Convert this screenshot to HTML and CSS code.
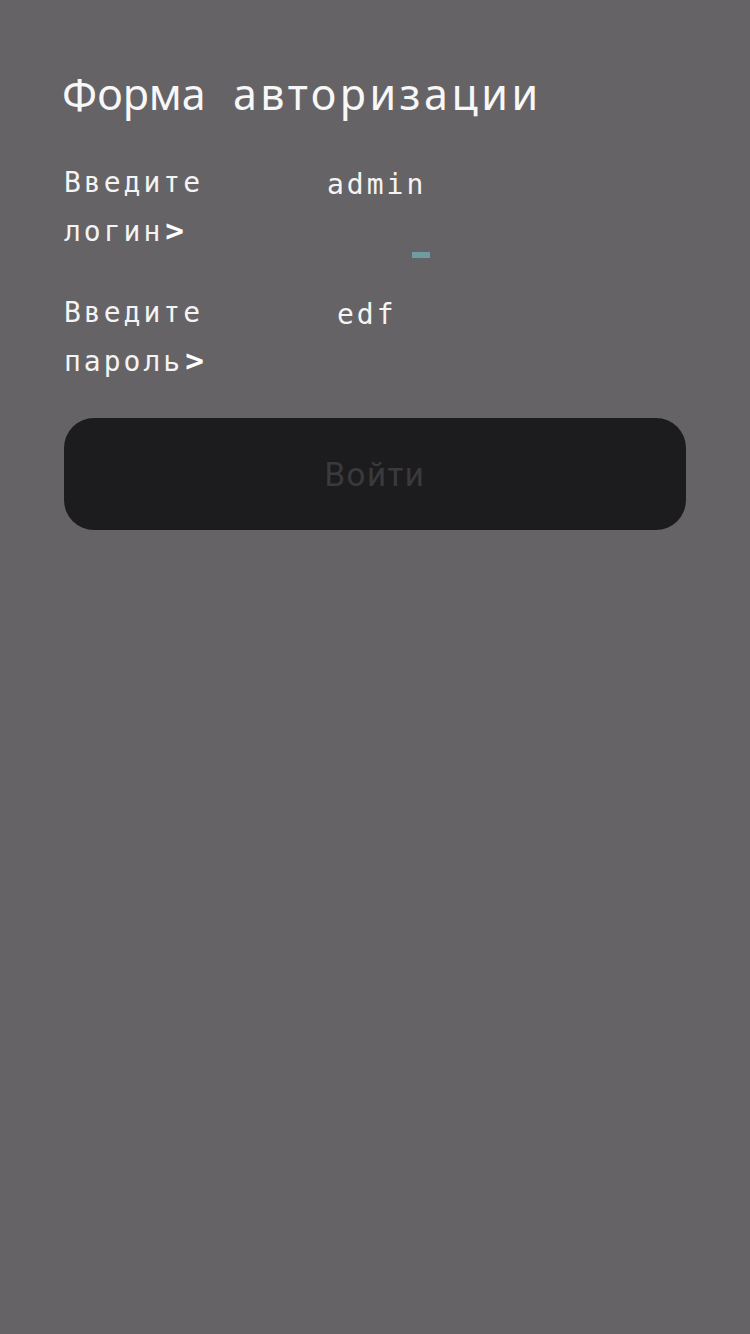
FILE: index.html
```html
<!DOCTYPE html>
<html lang="ru">
<head>
<meta charset="utf-8">
<title>Форма авторизации</title>
<link rel="stylesheet" href="styles.css">
</head>
<body>
<main class="page">
  <h1 class="title"><span class="title-a">Форма</span>&nbsp; <span class="title-b">авторизации</span></h1>
  <div class="field">
    <div class="label">Введите<br>логин<b>&gt;</b></div>
    <div class="value value-login">admin<span class="cursor"></span></div>
  </div>
  <div class="field">
    <div class="label">Введите<br>пароль<b>&gt;</b></div>
    <div class="value value-pass">edf</div>
  </div>
  <button class="btn" type="button">Войти</button>
</main>
</body>
</html>
```

FILE: styles.css
```css
html, body {
  margin: 0;
  padding: 0;
  background: #656366;
}
.page {
  width: 750px;
  height: 1334px;
  box-sizing: border-box;
  padding: 64px 64px 0 64px;
  display: flex;
  flex-direction: column;
}
.title {
  margin: 0 0 0 -2px;
  font-family: "Noto Sans", "Open Sans", sans-serif;
  font-weight: 400;
  font-size: 43px;
  line-height: 60px;
  letter-spacing: 2.4px;
  color: #f7f7f7;
}
.title-a {
  letter-spacing: 0;
}
.title-b {
  letter-spacing: 3.5px;
}
.field {
  display: flex;
  margin-top: 34px;
}
.field + .field {
  margin-top: 32px;
}
.label, .value {
  font-family: "DejaVu Sans Mono", "Liberation Mono", monospace;
  font-size: 28px;
  line-height: 49px;
  letter-spacing: 3px;
  color: #f4f4f4;
}
.label {
  width: 263px;
  flex: none;
}
.label b {
  font-weight: 700;
  font-size: 31px;
  line-height: 20px;
  margin-left: 2px;
  color: #ffffff;
}
.value {
  position: relative;
  padding-top: 2px;
}
.value-pass {
  padding-left: 10px;
}
.cursor {
  position: absolute;
  left: 85px;
  top: 94px;
  width: 18px;
  height: 6px;
  background: #6f9ba3;
}
.btn {
  margin-top: 32px;
  width: 622px;
  height: 112px;
  border: none;
  border-radius: 30px;
  background: #1c1c1e;
  color: #3a3a3c;
  font-family: Roboto, "Noto Sans", sans-serif;
  font-size: 33px;
  letter-spacing: 1.5px;
  padding: 0;
}
```
